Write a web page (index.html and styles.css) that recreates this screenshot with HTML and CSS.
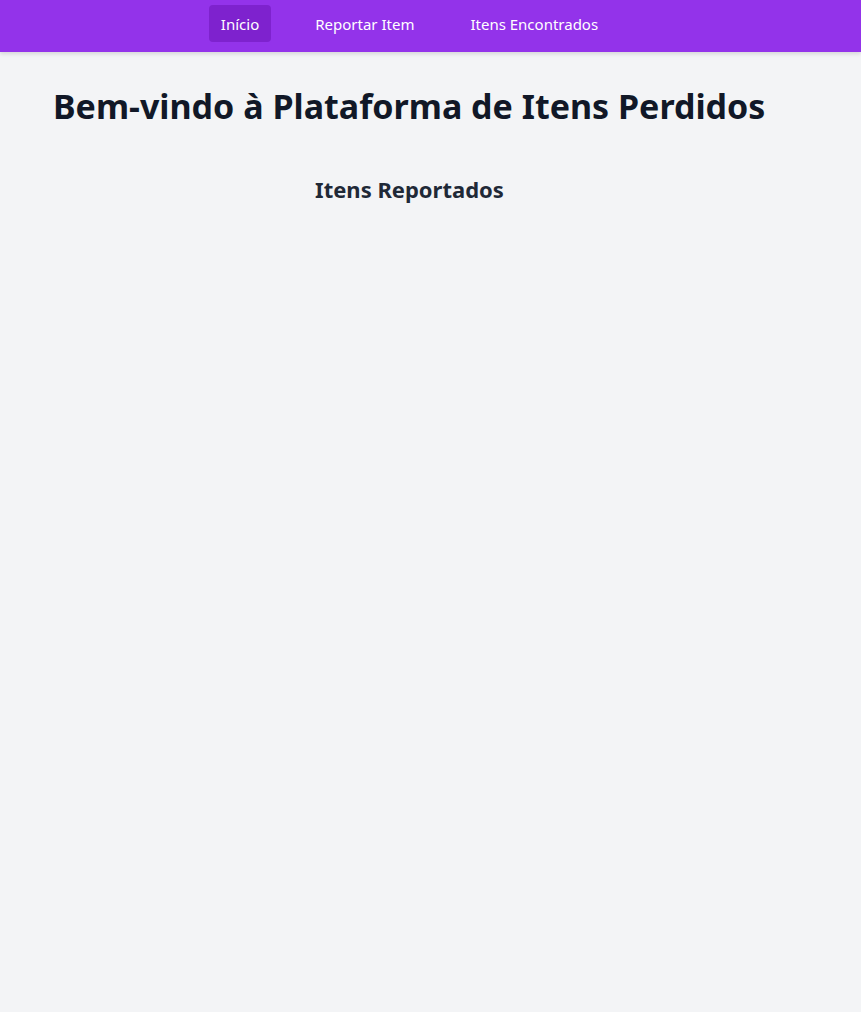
FILE: index.html
```html
<!DOCTYPE html>
<html lang="pt-BR">
<head>
<meta charset="utf-8">
<title>Itens Perdidos</title>
<link rel="stylesheet" href="styles.css">
</head>
<body>
<div class="page">
  <nav class="navbar">
    <ul class="nav-list">
      <li><a class="nav-link active" href="#">Início</a></li>
      <li><a class="nav-link" href="#">Reportar Item</a></li>
      <li><a class="nav-link" href="#">Itens Encontrados</a></li>
    </ul>
  </nav>
  <main class="content">
    <h1 class="title">Bem-vindo à Plataforma de Itens Perdidos</h1>
    <section class="reported">
      <h2 class="subtitle">Itens Reportados</h2>
    </section>
  </main>
</div>
</body>
</html>
```

FILE: styles.css
```css
html, body {
  margin: 0;
  padding: 0;
  background: #f3f4f6;
  font-family: "Noto Sans", "Open Sans", sans-serif;
}
.page {
  min-height: 1012px;
}
.navbar {
  background: #9333ea;
  height: 52px;
  box-shadow: 0 2px 4px rgba(0,0,0,0.12);
}
.nav-list {
  list-style: none;
  margin: 0;
  padding: 5px 0 0;
  width: 819px;
  display: flex;
  justify-content: center;
  gap: 32px;
}
.nav-link {
  display: block;
  color: #ffffff;
  text-decoration: none;
  font-size: 15px;
  line-height: 38px;
  height: 37px;
  padding: 0 12px;
  border-radius: 4px;
}
.nav-link.active {
  background: #7e22ce;
}
.content {
  width: 819px;
}
.title {
  margin: 0;
  padding: 32px 0 0 53px;
  font-size: 34px;
  line-height: 44px;
  font-weight: 700;
  color: #111827;
}
.subtitle {
  margin: 0;
  padding-top: 45px;
  text-align: center;
  font-size: 22px;
  line-height: 32px;
  font-weight: 700;
  color: #1f2937;
}
```
